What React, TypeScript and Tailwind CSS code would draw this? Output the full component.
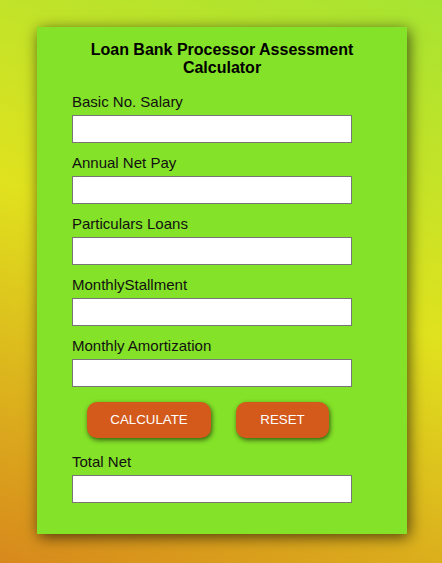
const fields = [
  'Basic No. Salary',
  'Annual Net Pay',
  'Particulars Loans',
  'MonthlyStallment',
  'Monthly Amortization',
];

const Field = ({ label }: { label: string }) => (
  <div className="mb-[11px]">
    <label className="block text-[15px] leading-[17px] mb-[5px] text-[#111]">{label}</label>
    <input
      type="text"
      className="block w-[280px] h-[28px] bg-white border border-[#767676] outline-none"
    />
  </div>
);

export default function App() {
  return (
    <div className="min-h-screen bg-[linear-gradient(20deg,#d8891c_0%,#e0e21e_53%,#a6e432_100%)] pt-[27px] pl-[37px] font-['Liberation_Sans',Arial,sans-serif]">
      <div className="w-[370px] bg-[#84e228] pt-[14px] pb-[31px] px-[35px] shadow-[2px_3px_14px_rgba(0,0,0,0.65)]">
        <h1 className="text-center font-bold text-[16px] leading-[18px] text-black mb-[16px]">
          Loan Bank Processor Assessment
          <br />
          Calculator
        </h1>
        {fields.map((f) => (
          <Field key={f} label={f} />
        ))}
        <div className="flex gap-[25px] pl-[15px] mt-[15px] mb-[15px]">
          <button className="w-[124px] h-[36px] rounded-[10px] bg-[#d35a1a] text-white text-[13.3px] uppercase shadow-[1px_2px_5px_rgba(0,0,0,0.6)]">
            Calculate
          </button>
          <button className="w-[93px] h-[36px] rounded-[10px] bg-[#d35a1a] text-white text-[13.3px] uppercase shadow-[1px_2px_5px_rgba(0,0,0,0.6)]">
            Reset
          </button>
        </div>
        <label className="block text-[15px] leading-[17px] mb-[5px] text-[#111]">Total Net</label>
        <input
          type="text"
          className="block w-[280px] h-[28px] bg-white border border-[#767676] outline-none"
        />
      </div>
    </div>
  );
}
